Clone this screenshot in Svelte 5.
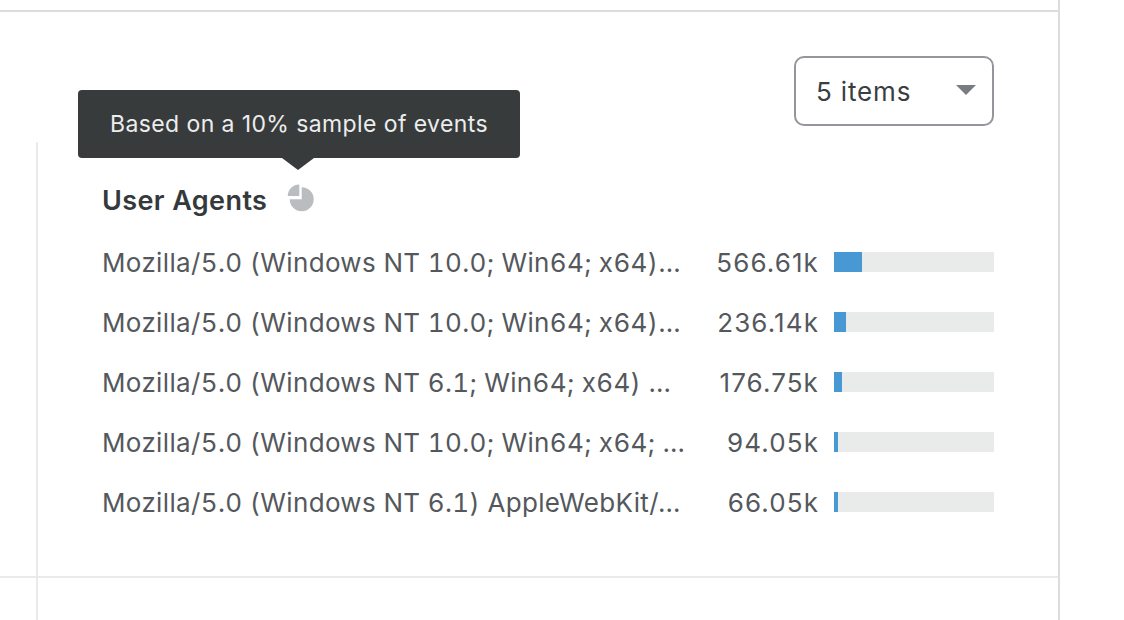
<script>
  const rows = [
    { agent: "Mozilla/5.0 (Windows NT 10.0; Win64; x64)…", value: "566.61k", fill: 28 },
    { agent: "Mozilla/5.0 (Windows NT 10.0; Win64; x64)…", value: "236.14k", fill: 12 },
    { agent: "Mozilla/5.0 (Windows NT 6.1; Win64; x64) …", value: "176.75k", fill: 8 },
    { agent: "Mozilla/5.0 (Windows NT 10.0; Win64; x64; …", value: "94.05k", fill: 4 },
    { agent: "Mozilla/5.0 (Windows NT 6.1) AppleWebKit/…", value: "66.05k", fill: 4 }
  ];
</script>

<main class="page">
  <section class="panel">
    <div class="toolbar">
      <div class="select">
        <span>5 items</span>
        <i class="caret"></i>
      </div>
    </div>
    <div class="cell">
      <div class="tooltip">Based on a 10% sample of events</div>
      <div class="title">
        <span>User Agents</span>
        <svg width="28" height="28" viewBox="0 0 28 28">
          <path d="M14.7 3.3A12 12 0 1 1 2.7 15.3H14.7Z" fill="#babdbf" />
          <path d="M12.3.5V12H.8A11.5 11.5 0 0 1 12.3.5Z" fill="#babdbf" />
        </svg>
      </div>
      {#each rows as row}
        <div class="row">
          <div class="agent">{row.agent}</div>
          <div class="value">{row.value}</div>
          <div class="bar"><div class="fill" style="width: {row.fill}px"></div></div>
        </div>
      {/each}
    </div>
  </section>
  <div class="below"></div>
</main>

<style>
  :global(body) {
    background: #fff;
    overflow: hidden;
  }

  .page {
    box-sizing: border-box;
    width: 1060px;
    height: 620px;
    padding-top: 10px;
    border-right: 2px solid #dcdcdc;
    font-family: Inter, "Liberation Sans", sans-serif;
    font-size: 26px;
    color: #54585c;
  }

  .panel {
    box-sizing: border-box;
    height: 568px;
    display: flex;
    flex-direction: column;
    border-top: 2px solid #dcdcdc;
    border-bottom: 2px solid #e9eaea;
  }

  .toolbar {
    display: flex;
    justify-content: flex-end;
    height: 130px;
    padding: 44px 64px 0 0;
    box-sizing: border-box;
  }

  .select {
    box-sizing: border-box;
    width: 200px;
    height: 70px;
    display: flex;
    align-items: center;
    justify-content: space-between;
    padding: 0 16px 0 20px;
    border: 2px solid #93979b;
    border-radius: 10px;
    letter-spacing: 0.85px;
    color: #3a3e41;
  }

  .caret {
    width: 0;
    height: 0;
    margin-bottom: 2px;
    border-left: 10px solid transparent;
    border-right: 10px solid transparent;
    border-top: 10px solid #797d81;
  }

  .cell {
    position: relative;
    flex: 1;
    margin-left: 36px;
    padding: 0 64px;
    border-left: 2px solid #e9eaea;
  }

  .tooltip {
    position: absolute;
    left: 40px;
    top: -52px;
    box-sizing: border-box;
    width: 442px;
    height: 68px;
    display: flex;
    align-items: center;
    justify-content: center;
    background: #383b3c;
    border-radius: 4px;
    color: #eceded;
    font-size: 23px;
    letter-spacing: 0.4px;
  }

  .tooltip::after {
    content: "";
    position: absolute;
    left: 204px;
    top: 68px;
    border-left: 16px solid transparent;
    border-right: 16px solid transparent;
    border-top: 12px solid #383b3c;
  }

  .title {
    display: flex;
    align-items: center;
    gap: 20px;
    height: 28px;
    margin-top: 42px;
    margin-bottom: 20px;
    font-size: 27px;
    font-weight: 600;
    letter-spacing: 0.4px;
    color: #35393c;
  }

  .title span {
    padding-top: 4px;
  }

  .row {
    display: flex;
    align-items: center;
    height: 60px;
  }

  .agent {
    width: 586px;
    white-space: pre;
    letter-spacing: 0.35px;
    font-variant-numeric: tabular-nums;
  }

  .value {
    width: 131px;
    text-align: right;
    letter-spacing: 1.1px;
  }

  .bar {
    width: 160px;
    height: 20px;
    margin-left: 15px;
    background: #e9eaea;
  }

  .fill {
    height: 100%;
    background: #4798d3;
  }

  .below {
    height: 42px;
    margin-left: 36px;
    border-left: 2px solid #e9eaea;
  }
</style>
